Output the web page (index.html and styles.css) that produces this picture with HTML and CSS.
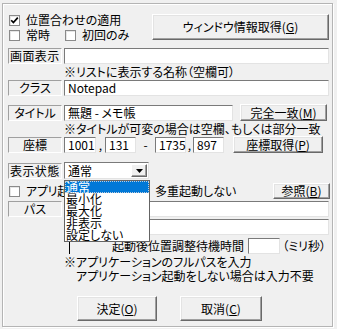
FILE: index.html
```html
<!DOCTYPE html>
<html lang="ja">
<head>
<meta charset="utf-8">
<title>位置合わせ</title>
<link rel="stylesheet" href="styles.css">
</head>
<body>
<div class="dlg">
  <div class="top">
    <div class="checks">
      <div class="chk"><span class="box"><svg width="11" height="11" viewBox="0 0 11 11"><path d="M2.2 5.2 L4.4 7.6 L8.8 2.6" fill="none" stroke="#000" stroke-width="1.7"/></svg></span>位置合わせの適用</div>
      <div class="chkrow">
        <div class="chk w56"><span class="box"></span>常時</div>
        <div class="chk"><span class="box"></span>初回のみ</div>
      </div>
    </div>
    <div class="btn btn-winfo">ウィンドウ情報取得(<u>G</u>)</div>
  </div>

  <div class="row r3"><span class="lbl lbl-full">画面表示</span><span class="edit grow"></span></div>
  <div class="note n1">※リストに表示する名称（空欄可）</div>

  <div class="row r5"><span class="lbl">クラス</span><span class="edit grow">Notepad</span></div>

  <div class="row r6"><span class="lbl">タイトル</span><span class="edit e-title">無題 - メモ帳</span><div class="btn btn-match">完全一致(<u>M</u>)</div></div>
  <div class="note n2">※タイトルが可変の場合は空欄、もしくは部分一致</div>

  <div class="row r8">
    <span class="lbl">座標</span>
    <span class="edit e-num w32">1001</span><span class="sep s1">,</span>
    <span class="edit e-num">131</span><span class="sep s2">-</span>
    <span class="edit e-num">1735</span><span class="sep s3">,</span>
    <span class="edit e-num">897</span>
    <div class="btn btn-pos">座標取得(<u>P</u>)</div>
  </div>

  <div class="row r9">
    <span class="lbl lbl-full">表示状態</span>
    <div class="combo">
      <span class="combo-text">通常</span>
      <span class="combo-arrow"><svg width="7" height="4" viewBox="0 0 7 4"><path d="M0 0 H7 L3.5 4 Z" fill="#000"/></svg></span>
      <ul class="dropdown">
        <li class="sel">通常</li>
        <li>最小化</li>
        <li>最大化</li>
        <li>非表示</li>
        <li>設定しない</li>
      </ul>
    </div>
  </div>

  <div class="row r10">
    <div class="chk w129"><span class="box"></span><span class="part">アプリ起</span></div>
    <div class="chk"><span class="box"></span>多重起動しない</div>
    <div class="btn btn-ref">参照(<u>B</u>)</div>
  </div>

  <div class="row r11"><span class="lbl">パス</span><span class="edit grow"></span></div>
  <div class="row r12"><span class="edit grow"></span></div>

  <div class="row r13">
    <span class="vline"></span>
    <span class="wait-label">起動後位置調整待機時間</span>
    <span class="edit e-wait"></span>
    <span class="unit">（ミリ秒）</span>
  </div>
  <div class="note n3">※アプリケーションのフルパスを入力</div>
  <div class="note n4">アプリケーション起動をしない場合は入力不要</div>

  <div class="actions">
    <div class="btn btn-ok">決定(<u>O</u>)</div>
    <div class="btn btn-cancel">取消(<u>C</u>)</div>
  </div>
</div>
</body>
</html>
```

FILE: styles.css
```css
* { box-sizing: border-box; margin: 0; padding: 0; }
html, body { background: #f0f0f0; }
body {
  width: 337px;
  height: 329px;
  overflow: hidden;
  font-family: "Noto Sans CJK JP", "Noto Sans", sans-serif;
  font-size: 12px;
  line-height: 14px;
  color: #000;
  font-feature-settings: "palt";
}

.dlg {
  margin: 3px 0 0 2px;
  width: 331px;
  height: 324px;
  border: 1px solid #b4b4b4;
  box-shadow: inset 1px 1px 0 #fff, 1px 1px 0 #fff;
  padding: 9px 3px 0 5px;
}

/* top block */
.top { display: flex; height: 30px; }
.checks { display: flex; flex-direction: column; }
.chkrow { display: flex; }
.chk { display: flex; align-items: center; height: 16px; white-space: nowrap; }
.w56 { width: 56px; }
.w129 { width: 129px; }
.part { letter-spacing: -0.3px; }
.box {
  width: 11px; height: 11px;
  margin: 0 6px 0 1px;
  background: #fff;
  border: 1px solid #8a8a8a;
  box-shadow: inset 1px 1px 0 #e6e6e6;
  position: relative;
  flex: none;
}
.box svg { position: absolute; left: -1px; top: -1px; }

/* buttons */
.btn {
  display: flex; align-items: center; justify-content: center;
  background: #f0f0f0;
  border: 1px solid;
  border-color: #fff #696969 #696969 #fff;
  box-shadow: inset -1px -1px 0 #a0a0a0, inset 1px 1px 0 #e3e3e3;
  white-space: nowrap;
  flex: none;
}
.btn u { text-decoration: underline; text-underline-offset: 1px; }
.btn-winfo { margin: 1px 0 0 auto; width: 177px; height: 26px; }
.btn-match { margin-left: 7px; width: 87px; height: 17px; }
.btn-pos { margin-left: 9px; width: 90px; height: 17px; }
.btn-ref { margin-left: auto; margin-right: -1px; width: 57px; height: 16px; }

/* rows */
.row { display: flex; align-items: center; height: 16px; }
.lbl {
  width: 54px; height: 16px; flex: none;
  margin-right: 2px;
  border: 1px solid;
  border-color: #a0a0a0 #fff #fff #a0a0a0;
  text-align: center;
  line-height: 14px;
  white-space: nowrap;
}
.lbl-full { text-align: left; padding-left: 1px; letter-spacing: 0.4px; }
.edit {
  height: 16px;
  background: #fff;
  border: 1px solid;
  border-color: #7a7a7a #e3e3e3 #e3e3e3 #7a7a7a;
  padding-left: 3px;
  line-height: 14px;
  white-space: nowrap;
  flex: none;
}
.grow { flex: 1; }
.note { height: 15px; line-height: 15px; padding-left: 56px; white-space: nowrap; }

.r3 { margin-top: 5px; }
.n1 { height: 15px; }
.r5 { margin-top: 1px; }
.r6 { margin-top: 8px; height: 17px; }
.e-title { width: 169px; }
.n2 { height: 15px; }
.r8 { height: 17px; }
.e-num { width: 31px; }
.w32 { width: 32px; }
.sep { text-align: center; flex: none; }
.s1 { width: 9px; }
.s2 { width: 19px; }
.s3 { width: 7px; }

.r9 { margin-top: 9px; height: 17px; }
.combo {
  position: relative;
  width: 85px; height: 17px;
  background: #fff;
  border: 1px solid;
  border-color: #7a7a7a #e3e3e3 #e3e3e3 #7a7a7a;
  display: flex; align-items: center;
}
.combo-text { padding-left: 3px; flex: 1; }
.combo-arrow {
  width: 16px; height: 13px; margin-right: 1px;
  display: flex; align-items: center; justify-content: center;
  background: #f0f0f0;
  border: 1px solid;
  border-color: #fff #696969 #696969 #fff;
  box-shadow: inset -1px -1px 0 #a0a0a0;
}
.dropdown {
  position: absolute;
  left: -1px; top: 17px;
  width: 86px; height: 62px;
  background: #fff;
  border: 1px solid #646464;
  list-style: none;
  z-index: 5;
}
.dropdown li { height: 12px; line-height: 12px; padding-left: 1px; white-space: nowrap; }
.dropdown li.sel { background: #0078d7; color: #fff; outline: 1px dotted #bcd; outline-offset: -1px; }

.r10 { margin-top: 4px; }
.r11 { margin-top: 2px; }
.r12 { margin-top: 2px; padding-left: 56px; }
.r13 { margin-top: 3px; }
.vline { width: 1px; height: 12px; margin: 4px 0 0 61px; background: #000; flex: none; }
.wait-label { margin-left: 42px; white-space: nowrap; }
.e-wait { width: 32px; margin-left: auto; }
.unit { margin-left: 2px; margin-right: 3px; white-space: nowrap; }
.n3 { margin-top: 1px; height: 14px; line-height: 14px; }
.n4 { height: 14px; line-height: 14px; padding-left: 68px; }

.actions { display: flex; margin-top: 13px; }
.btn-ok { margin-left: 69px; width: 80px; height: 25px; }
.btn-cancel { margin-left: 23px; width: 82px; height: 25px; }
```
